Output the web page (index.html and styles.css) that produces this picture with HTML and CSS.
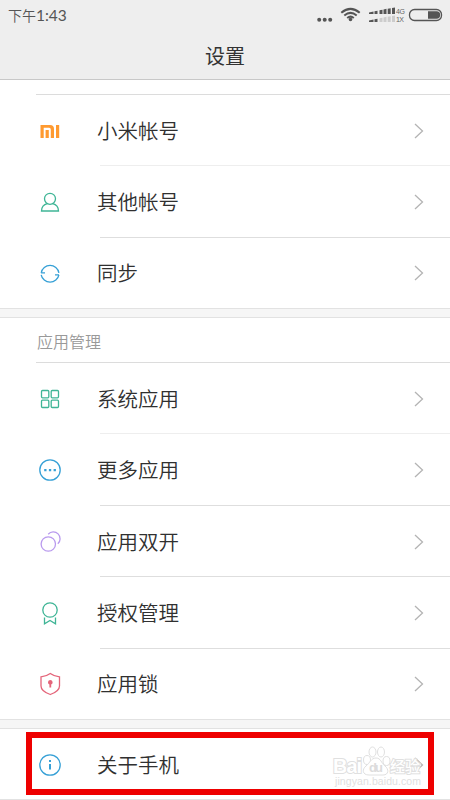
FILE: index.html
```
<!DOCTYPE html>
<html lang="zh-CN">
  <head>
    <meta charset="utf-8">
    <title>设置</title>
    <link rel="stylesheet" href="styles.css">
  </head>
  <body>
    <div class="header">
      <div class="status">
        <span class="time">下午<span class="num">1:43</span></span>
        <svg class="status-icons" width="126" height="24" viewBox="0 0 126 24">
          <g fill="#555">
            <circle cx="2.2" cy="19.7" r="2"/><circle cx="7.7" cy="19.7" r="2"/><circle cx="13.2" cy="19.7" r="2"/>
            <circle cx="33.500" cy="19.500" r="1.800"/>
          </g>
          <g fill="none" stroke="#555" stroke-width="2">
            <path d="M24.300 12.800Q33.500 5 42.700 12.800"/>
            <path d="M27.300 15.500Q33.500 10.300 39.700 15.500"/>
            <path d="M30.200 18Q33.500 15.300 36.800 18"/>
          </g>
          <g fill="#555">
            <path d="M52 12.500l4.500-1V14H52zM57.500 11.200l3-.5V14h-3zM62.500 10.200l3-.5V14h-3zM66.500 9.400l3-.6V14h-3zM70.700 8.700l3-.5V14h-3zM75 8l3-.5V14h-3z"/>
            <path d="M52 20.500l4.500-1V22H52zM57.500 19.200l3-.5V22h-3z"/>
          </g>
          <path fill="#ccc" d="M62.500 18.200l3-.5V22h-3zM66.500 17.400l3-.6V22h-3zM70.700 16.700l3-.5V22h-3zM75 16l3-.5V22h-3z"/>
          <text x="79" y="14" textLength="9">4G</text>
          <text x="79" y="22" textLength="8">1X</text>
          <rect x="92.500" y="9.500" width="32" height="11" rx="5" fill="none" stroke="#555" stroke-width="1.300"/>
          <path fill="#555" d="M111 11.300h8.500a3.700 3.700 0 0 1 0 7.400H111z"/>
        </svg>
      </div>
      <h1>设置</h1>
    </div>

    <ul class="list list-account">
      <li class="light">
        <svg class="icon" viewBox="0 0 24 24"><path fill="#ff9a30" d="M2.500 6h9.500q4 0 4 4v9h-3.200v-8.500q0-1.700-1.700-1.700H5.700V19H2.500zM7.600 11h3.200v8H7.600zM18 6h3.200v13H18z"/></svg>
        <span class="name">小米帐号</span><svg class="arrow" viewBox="0 0 10 16"><path d="M1 1l7.500 7L1 15"/></svg>
      </li>
      <li>
        <svg class="icon green" viewBox="0 0 24 24"><circle cx="12" cy="8.800" r="5.500"/><path d="M9.300 13.600C5.500 14.500 3.600 17 3.500 21h17c-.1-4-2-6.500-5.800-7.400"/></svg>
        <span class="name">其他帐号</span><svg class="arrow" viewBox="0 0 10 16"><path d="M1 1l7.500 7L1 15"/></svg>
      </li>
      <li>
        <svg class="icon blue" viewBox="0 0 24 24"><path d="M3.100 11.800H7M3.200 11.800A9 9 0 0 1 20.900 11.800M21 13.800H17M20.900 13.800A9 9 0 0 1 3.200 13.800"/></svg>
        <span class="name">同步</span><svg class="arrow" viewBox="0 0 10 16"><path d="M1 1l7.500 7L1 15"/></svg>
      </li>
    </ul>

    <div class="gap"></div>
    <h2>应用管理</h2>
    <ul class="list list-app">
      <li class="light">
        <svg class="icon green" viewBox="0 0 24 24"><rect x="3.500" y="3.500" width="7.300" height="7.300" rx="1"/><rect x="13.200" y="3.500" width="7.300" height="7.300" rx="1"/><rect x="3.500" y="13.200" width="7.300" height="7.300" rx="1"/><rect x="13.200" y="13.200" width="7.300" height="7.300" rx="1"/></svg>
        <span class="name">系统应用</span><svg class="arrow" viewBox="0 0 10 16"><path d="M1 1l7.500 7L1 15"/></svg>
      </li>
      <li>
        <svg class="icon blue" viewBox="0 0 24 24"><circle cx="12" cy="12" r="10.200"/><path class="dots" d="M6.200 11h2.300v2.300H6.200zM10.900 11h2.300v2.300h-2.300zM15.600 11h2.300v2.300h-2.300z"/></svg>
        <span class="name">更多应用</span><svg class="arrow" viewBox="0 0 10 16"><path d="M1 1l7.500 7L1 15"/></svg>
      </li>
      <li>
        <svg class="icon purple" viewBox="0 0 24 24"><circle cx="10.300" cy="14" r="7.200"/><path d="M10.200 4.200a6.800 6.800 0 1 1 9.600 9.600"/></svg>
        <span class="name">应用双开</span><svg class="arrow" viewBox="0 0 10 16"><path d="M1 1l7.500 7L1 15"/></svg>
      </li>
      <li>
        <svg class="icon green" viewBox="0 0 24 24"><circle cx="12" cy="9" r="7.200"/><path d="M6.500 16.500v6.300l5.500-3.300 5.500 3.300v-6.300"/></svg>
        <span class="name">授权管理</span><svg class="arrow" viewBox="0 0 10 16"><path d="M1 1l7.500 7L1 15"/></svg>
      </li>
      <li>
        <svg class="icon red" viewBox="0 0 24 24"><path d="M12.300 1.500c2.700 2 5.700 3.100 9.200 3.300V14c0 4-5 7-9.200 8.500C8 21 3 18 3 14V4.800c3.500-.2 6.600-1.300 9.300-3.300z"/><path class="dots" d="M12.300 8a2.400 2.400 0 0 1 .9 4.600v2.900h-1.800v-2.900A2.400 2.400 0 0 1 12.300 8z"/></svg>
        <span class="name">应用锁</span><svg class="arrow" viewBox="0 0 10 16"><path d="M1 1l7.500 7L1 15"/></svg>
      </li>
    </ul>

    <div class="gap"></div>
    <ul class="list list-about">
      <li>
        <svg class="icon blue" viewBox="0 0 24 24"><circle cx="12" cy="12" r="10.200"/><path class="dots" d="M11 7h2v2h-2zM11 11h2v5.500h-2z"/></svg>
        <span class="name">关于手机</span><svg class="arrow" viewBox="0 0 10 16"><path d="M1 1l7.500 7L1 15"/></svg>
        <svg class="watermark" width="94" height="46" viewBox="0 0 94 46">
          <g class="paw">
            <ellipse cx="35" cy="16" rx="3.500" ry="4.500"/><ellipse cx="40.500" cy="8" rx="3.500" ry="5"/>
            <ellipse cx="49" cy="8" rx="3.500" ry="5"/><ellipse cx="54.500" cy="17" rx="3.500" ry="4.500"/>
            <path d="M44 14c5 0 5 5 9 8s4 9-2 9H37c-7 0-7-6-3-9s5-8 10-8z"/>
          </g>
          <text class="wm-name" x="1" y="29" textLength="29">Bai</text>
          <text class="wm-du" x="37" y="28" textLength="14">du</text>
          <text class="wm-cn" x="58" y="28" textLength="30">经验</text>
          <text class="wm-url" x="3" y="41" textLength="86">jingyan.baidu.com</text>
        </svg>
        <div class="mark"></div>
      </li>
    </ul>
  </body>
</html>
```
FILE: styles.css
```
* {
  margin: 0;
  padding: 0;
  box-sizing: border-box;
}
body {
  height: 800px;
  overflow: hidden;
  background: #fff;
  color: #303030;
  font-family: "Noto Sans CJK SC", sans-serif;
}
.header {
  height: 80px;
  background: #eee;
  border-bottom: 1px solid #c8c8c8;
}
.status {
  display: flex;
  justify-content: space-between;
  height: 32px;
  padding: 0 7px 0 8px;
}
.time {
  font-size: 14px;
  font-weight: 350;
  line-height: 31px;
  color: #555;
}
.num {
  font-family: Lato, sans-serif;
  font-size: 15.5px;
  font-weight: 400;
}
.status-icons text {
  font-family: "Liberation Sans", sans-serif;
  font-size: 7px;
  fill: #666;
}
h1 {
  font-size: 20px;
  font-weight: 400;
  line-height: 48px;
  text-align: center;
  color: #333;
}
.list {
  display: flex;
  flex-direction: column;
  list-style: none;
}
.list-account {
  height: 215px;
  margin-top: 14px;
}
.list-account:before,
.list-app:before {
  content: "";
  flex: none;
  height: 1px;
  margin-left: 36px;
  background: #dcdcdc;
}
.list-app {
  height: 358px;
}
.list-about {
  height: 71px;
  border-bottom: 1px solid #e2e2e2;
}
.list li {
  flex: 1;
  display: flex;
  align-items: center;
  position: relative;
  padding: 0 26px 0 38px;
}
.list-about li {
  padding-top: 2px;
}
/* divider starts at the text, not at the icon */
.list li:not(:last-child):after {
  content: "";
  position: absolute;
  left: 100px;
  right: 0;
  bottom: 0;
  height: 1px;
  background: #dedede;
}
.list li.light:not(:last-child):after {
  background: #eee;
}
.icon {
  width: 24px;
  height: 24px;
  fill: none;
  stroke-width: 1.3;
}
.green { stroke: #3fb596; color: #3fb596; }
.blue { stroke: #36a0d6; color: #36a0d6; }
.purple { stroke: #b99aee; color: #b99aee; }
.red { stroke: #e4657a; color: #e4657a; }
.dots {
  fill: currentColor;
  stroke: none;
}
.name {
  flex: 1;
  padding: 0 0 2px 35px;
  font-size: 20.5px;
  font-weight: 350;
  line-height: 30px;
}
.arrow {
  width: 10px;
  height: 16px;
  fill: none;
  stroke: #b4b4b4;
  stroke-width: 1.3;
}
.gap {
  height: 10px;
  margin-top: -1px;
  background: #f6f6f6;
  border-top: 1px solid #e2e2e2;
  border-bottom: 1px solid #e2e2e2;
}
h2 {
  height: 44px;
  padding-left: 37px;
  font-size: 16px;
  font-weight: 350;
  line-height: 46px;
  color: #999;
}
.mark {
  position: absolute;
  left: 26px;
  top: 3px;
  width: 408px;
  height: 63px;
  border: 6px solid #ee0000;
}
.watermark {
  position: absolute;
  left: 332px;
  top: 15px;
  font-family: "Liberation Sans", sans-serif;
  fill: #fff;
  stroke: #e0e0e0;
  stroke-width: 1;
}
.wm-name,
.wm-cn {
  font-weight: bold;
  stroke-width: 2;
  paint-order: stroke;
}
.wm-name { font-size: 20px; }
.wm-du {
  font-size: 13px;
  font-weight: bold;
  fill: #dcdcdc;
  stroke: none;
}
.wm-cn {
  font-family: "Noto Sans CJK SC", sans-serif;
  font-size: 15px;
  font-weight: 500;
}
.wm-url {
  font-size: 10.5px;
  fill: #e0e0e0;
  stroke: none;
}
```
